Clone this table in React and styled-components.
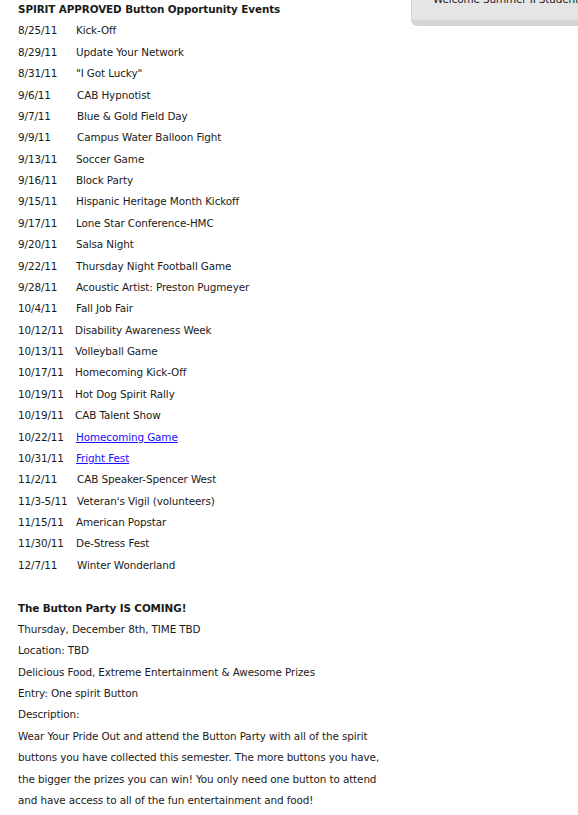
import React from "react";
import styled, { createGlobalStyle } from "styled-components";

const Global = createGlobalStyle`
  html, body { margin: 0; padding: 0; background: #fff; }
  body {
    font-family: "DejaVu Sans", Verdana, sans-serif;
    font-size: 10.4px;
    letter-spacing: -0.1px;
    color: #1a1a1a;
    overflow: hidden;
  }
`;

const Page = styled.div`
  display: flex;
  align-items: flex-start;
  width: 578px;
  height: 815px;
  overflow: hidden;
`;

const Main = styled.div`
  width: 411px;
  flex: none;
  padding-left: 18px;
  box-sizing: border-box;
  margin-top: -1px;
  line-height: 21.38px;
`;

const Heading = styled.div`
  font-weight: bold;
`;

const Line = styled.div`
  white-space: nowrap;
`;

const Row = styled.div`
  display: flex;
  white-space: nowrap;
`;

const DateCell = styled.span`
  width: ${(p) => 58 + (p.$nudge || 0)}px;
  flex: none;
`;

const Link = styled.a`
  color: #1a0dff;
  text-decoration: underline;
`;

const Spacer = styled.div`
  height: 21.38px;
`;

const Sidebar = styled.div`
  flex: 1;
  margin-top: -7px;
  height: 33px;
  background: #e5e5e5;
  border-left: 1px solid #d2d2d2;
  border-bottom: 6px solid #d6d6d6;
  border-bottom-left-radius: 6px;
  box-sizing: border-box;
  padding-left: 21px;
  line-height: 13px;
  white-space: nowrap;
  overflow: hidden;
  color: #222;
`;

const events = [
  ["8/25/11", "Kick-Off"],
  ["8/29/11", "Update Your Network"],
  ["8/31/11", "\"I Got Lucky\""],
  ["9/6/11", "CAB Hypnotist", 1],
  ["9/7/11", "Blue & Gold Field Day", 1],
  ["9/9/11", "Campus Water Balloon Fight", 1],
  ["9/13/11", "Soccer Game"],
  ["9/16/11", "Block Party"],
  ["9/15/11", "Hispanic Heritage Month Kickoff"],
  ["9/17/11", "Lone Star Conference-HMC"],
  ["9/20/11", "Salsa Night"],
  ["9/22/11", "Thursday Night Football Game"],
  ["9/28/11", "Acoustic Artist: Preston Pugmeyer"],
  ["10/4/11", "Fall Job Fair"],
  ["10/12/11", "Disability Awareness Week", -1],
  ["10/13/11", "Volleyball Game", -1],
  ["10/17/11", "Homecoming Kick-Off", -1],
  ["10/19/11", "Hot Dog Spirit Rally", -1],
  ["10/19/11", "CAB Talent Show", -1],
  ["10/22/11", "Homecoming Game", 0, true],
  ["10/31/11", "Fright Fest", 0, true],
  ["11/2/11", "CAB Speaker-Spencer West", 1],
  ["11/3-5/11", "Veteran's Vigil (volunteers)", 1],
  ["11/15/11", "American Popstar"],
  ["11/30/11", "De-Stress Fest"],
  ["12/7/11", "Winter Wonderland", 1],
];

export default function App() {
  return (
    <>
      <Global />
      <Page>
        <Main>
          <Heading>SPIRIT APPROVED Button Opportunity Events</Heading>
          {events.map(([d, t, n, link], i) => (
            <Row key={i}>
              <DateCell $nudge={n}>{d}</DateCell>
              {link ? <Link href="#">{t}</Link> : <span>{t}</span>}
            </Row>
          ))}
          <Spacer />
          <Heading>The Button Party IS COMING!</Heading>
          <Line>Thursday, December 8th, TIME TBD</Line>
          <Line>Location: TBD</Line>
          <Line>Delicious Food, Extreme Entertainment &amp; Awesome Prizes</Line>
          <Line>Entry: One spirit Button</Line>
          <Line>Description:</Line>
          <Line>Wear Your Pride Out and attend the Button Party with all of the spirit</Line>
          <Line>buttons you have collected this semester. The more buttons you have,</Line>
          <Line>the bigger the prizes you can win! You only need one button to attend</Line>
          <Line>and have access to all of the fun entertainment and food!</Line>
        </Main>
        <Sidebar>Welcome Summer II Students</Sidebar>
      </Page>
    </>
  );
}
